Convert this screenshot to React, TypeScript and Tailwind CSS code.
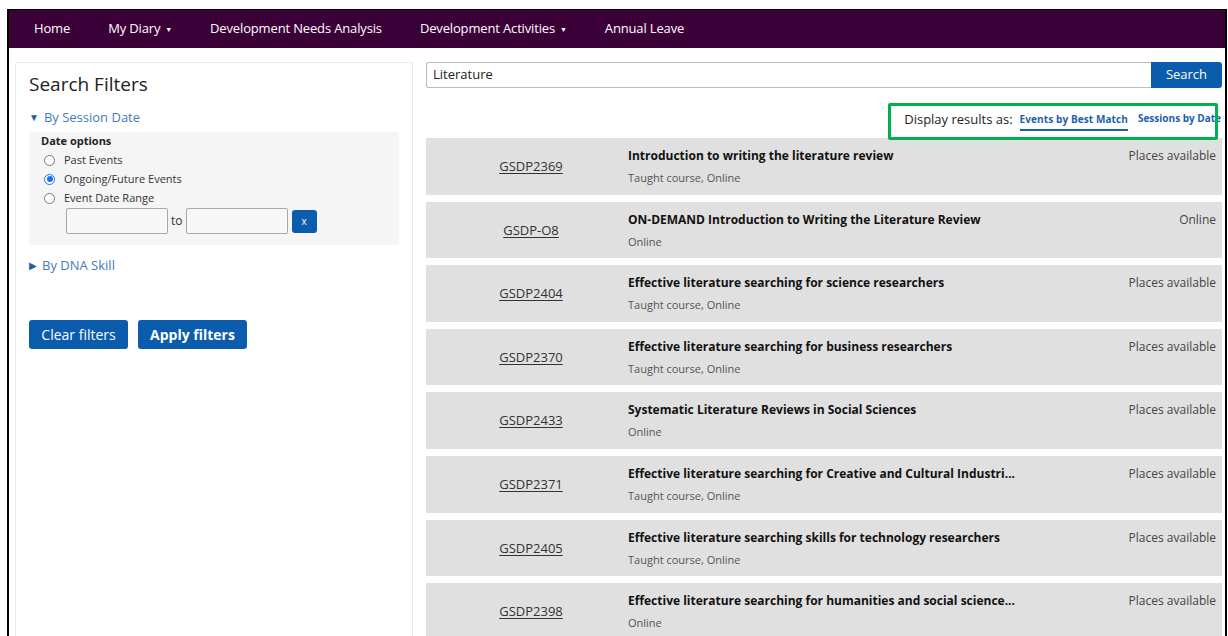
import React from 'react';

type Result = {
  code: string;
  title: string;
  kind: string;
  status: string;
};

const RESULTS: Result[] = [
  { code: 'GSDP2369', title: 'Introduction to writing the literature review', kind: 'Taught course, Online', status: 'Places available' },
  { code: 'GSDP-O8', title: 'ON-DEMAND Introduction to Writing the Literature Review', kind: 'Online', status: 'Online' },
  { code: 'GSDP2404', title: 'Effective literature searching for science researchers', kind: 'Taught course, Online', status: 'Places available' },
  { code: 'GSDP2370', title: 'Effective literature searching for business researchers', kind: 'Taught course, Online', status: 'Places available' },
  { code: 'GSDP2433', title: 'Systematic Literature Reviews in Social Sciences', kind: 'Online', status: 'Places available' },
  { code: 'GSDP2371', title: 'Effective literature searching for Creative and Cultural Industri...', kind: 'Taught course, Online', status: 'Places available' },
  { code: 'GSDP2405', title: 'Effective literature searching skills for technology researchers', kind: 'Taught course, Online', status: 'Places available' },
  { code: 'GSDP2398', title: 'Effective literature searching for humanities and social science...', kind: 'Online', status: 'Places available' },
];

const NAV = [
  { label: 'Home', menu: false },
  { label: 'My Diary', menu: true },
  { label: 'Development Needs Analysis', menu: false },
  { label: 'Development Activities', menu: true },
  { label: 'Annual Leave', menu: false },
];

const Radio: React.FC<{ checked?: boolean; label: string }> = ({ checked, label }) => (
  <label className="flex items-center h-[19px] text-[11px] text-[#333]">
    <span
      className={`ml-[3px] mr-[9px] w-[11px] h-[11px] rounded-full border flex items-center justify-center bg-white ${
        checked ? 'border-[#1a73e8]' : 'border-[#767676]'
      }`}
    >
      {checked && <span className="w-[6px] h-[6px] rounded-full bg-[#1a73e8]" />}
    </span>
    {label}
  </label>
);

export default function App() {
  return (
    <div className="w-[1228px] h-[636px] overflow-hidden bg-white font-['Open_Sans',sans-serif]">
      <div className="ml-[7px] mr-[1px] mt-[9px] h-[627px] border-l-2 border-t border-r-2 border-black overflow-hidden flex flex-col">
        {/* top navigation */}
        <nav className="h-[38px] bg-[#3c0039] flex items-center pl-[6px] shrink-0">
          {NAV.map((n) => (
            <span key={n.label} className="px-[19px] text-[13px] tracking-[-0.15px] text-white flex items-center">
              {n.label}
              {n.menu && <span className="ml-[5px] text-[7px] mt-[2px]">▼</span>}
            </span>
          ))}
        </nav>

        <div className="flex gap-[13px] pl-[6px] pr-[3px] pt-[14px] flex-1 min-h-0">
          {/* filters */}
          <aside className="w-[398px] shrink-0 border border-[#e8e8e8] rounded-t-[3px] border-b-0 px-[13px] pt-[8px]">
            <h2 className="text-[19px] text-[#222] leading-[26px]">Search Filters</h2>
            <button className="mt-[11px] flex items-center text-[13px] text-[#3f7bc1]">
              <span className="text-[10px] mr-[5px] text-[#1d5fa8]">▼</span>By Session Date
            </button>
            <div className="mt-[4px] bg-[#f5f5f5] rounded-[3px] pl-[12px] pt-[1px] pb-[10px] h-[113px]">
              <div className="text-[11px] font-bold text-[#222] leading-[16px]">Date options</div>
              <div className="mt-[2px]">
                <Radio label="Past Events" />
                <Radio checked label="Ongoing/Future Events" />
                <Radio label="Event Date Range" />
              </div>
              <div className="flex items-center ml-[25px] mt-[0px]">
                <input className="w-[102px] h-[26px] border border-[#a9a9a9] rounded-[2px] bg-[#f7f7f7]" />
                <span className="mx-[3px] text-[12px] text-[#333]">to</span>
                <input className="w-[102px] h-[26px] border border-[#a9a9a9] rounded-[2px] bg-[#f7f7f7]" />
                <button className="ml-[4px] mt-[2px] w-[25px] h-[23px] bg-[#0b5cad] rounded-[3px] text-white text-[10px]">x</button>
              </div>
            </div>
            <button className="mt-[11px] flex items-center text-[13px] text-[#3f7bc1]">
              <span className="text-[10px] mr-[5px] text-[#1d5fa8]">▶</span>By DNA Skill
            </button>
            <div className="mt-[45px] flex gap-[10px]">
              <button className="w-[99px] h-[29px] bg-[#0b5cad] rounded-[3px] text-white text-[14px]">Clear filters</button>
              <button className="w-[109px] h-[29px] bg-[#0b5cad] rounded-[3px] text-white text-[14px] font-bold">Apply filters</button>
            </div>
          </aside>

          {/* results */}
          <main className="flex-1 min-w-0">
            <div className="flex h-[26px]">
              <input
                defaultValue="Literature"
                className="flex-1 border border-[#bdbdbd] border-r-0 rounded-l-[3px] px-[6px] text-[13px] text-[#222] outline-none"
              />
              <button className="w-[71px] bg-[#0b5cad] rounded-r-[3px] text-white text-[13px]">Search</button>
            </div>

            <div className="relative h-[50px] flex items-center justify-end pt-[13px]">
              <span className="text-[13px] text-[#222] mr-[7px]">Display results as:</span>
              <span className="text-[10px] font-bold text-[#1d5fa8] border-b-2 border-[#1d5fa8] pb-[2px] mt-[3px] mr-[10px] tracking-[0.1px]">
                Events by Best Match
              </span>
              <span className="text-[10px] font-bold text-[#1d5fa8] whitespace-nowrap pb-[4px] mt-[1px] mr-[1px]">
                Sessions by Date
              </span>
              <div className="absolute left-[462px] right-[4px] top-[15px] h-[37px] border-[3px] border-[#00b050] rounded-[2px] pointer-events-none" />
            </div>

            <div className="flex flex-col gap-[7px]">
              {RESULTS.map((r) => (
                <div key={r.code} className="h-[56.6px] bg-[#e0e0e0] flex shrink-0">
                  <div className="w-[210px] shrink-0 flex items-center justify-center pt-[1px]">
                    <span className="text-[13px] text-[#333] underline underline-offset-2">{r.code}</span>
                  </div>
                  <div className="flex-1 min-w-0 pt-[10px] ml-[-8px]">
                    <div className="text-[12px] font-bold text-[#111] leading-[16px]">{r.title}</div>
                    <div className="text-[11px] text-[#555] mt-[6px] leading-[15px]">{r.kind}</div>
                  </div>
                  <div className="pr-[6px] pt-[10px] text-[12px] text-[#444] leading-[16px] whitespace-nowrap">{r.status}</div>
                </div>
              ))}
            </div>
          </main>
        </div>
      </div>
    </div>
  );
}
